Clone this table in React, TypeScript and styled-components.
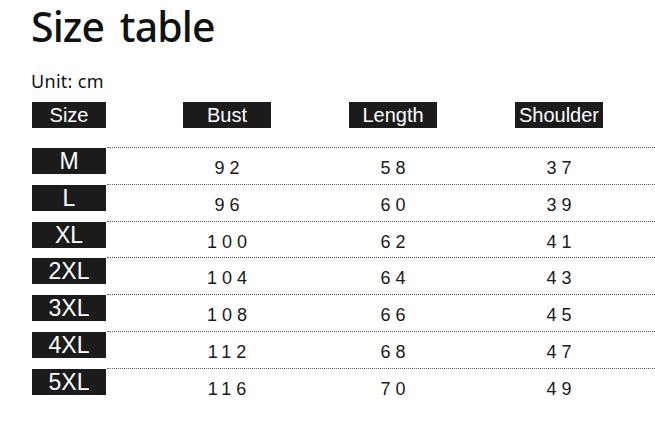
import React from 'react';
import styled, { createGlobalStyle } from 'styled-components';

const GlobalStyle = createGlobalStyle`
  html, body {
    margin: 0;
    padding: 0;
    background: #ffffff;
  }
  body {
    font-family: "Liberation Sans", Arial, sans-serif;
    color: #111;
  }
`;

const Page = styled.div`
  width: 655px;
  height: 427px;
  padding-left: 31px;
  box-sizing: border-box;
  overflow: hidden;
`;

const Title = styled.h1`
  margin: -2px 0 0;
  font-family: "Noto Sans", "Open Sans", sans-serif;
  font-weight: 500;
  font-size: 41px;
  line-height: 56px;
  letter-spacing: -0.9px;
  word-spacing: 6px;
  color: #111;
`;

const Unit = styled.div`
  margin-top: 17px;
  font-family: "Noto Sans", "Open Sans", sans-serif;
  font-size: 18px;
  line-height: 20px;
  letter-spacing: 0.3px;
  color: #111;
`;

const HeaderRow = styled.div`
  display: flex;
  margin-top: 11px;
  padding-left: 1px;
`;

const Box = styled.div<{ $w: number; $size: number }>`
  width: ${(p) => p.$w}px;
  height: 26px;
  background: #1b1b1b;
  color: #fff;
  font-family: "Liberation Sans", Arial, sans-serif;
  font-size: ${(p) => p.$size}px;
  line-height: 26px;
  text-align: center;
  flex-shrink: 0;
`;

const HeadCells = styled.div`
  display: flex;
  padding-left: 38px;
`;

const HeadCell = styled.div`
  width: 166px;
  display: flex;
  justify-content: center;
`;

const Body = styled.div`
  margin-top: 19px;
  display: flex;
  flex-direction: column;
`;

const Row = styled.div`
  display: flex;
  align-items: flex-start;
  height: 36.8px;
  padding-left: 1px;
`;

const LabelWrap = styled.div`
  padding-top: 1px;
`;

const Values = styled.div`
  flex: 1;
  display: flex;
  margin-left: 1px;
  padding-left: 37px;
  border-top: 1px dotted #5a5a5a;
`;

const Value = styled.div`
  width: 166px;
  padding-top: 11px;
  padding-left: 5px;
  box-sizing: border-box;
  text-align: center;
  font-family: "Liberation Sans", Arial, sans-serif;
  font-size: 18px;
  line-height: 18px;
  letter-spacing: 5px;
  color: #1a1a1a;
`;

const rows = [
  { size: 'M', bust: 92, length: 58, shoulder: 37 },
  { size: 'L', bust: 96, length: 60, shoulder: 39 },
  { size: 'XL', bust: 100, length: 62, shoulder: 41 },
  { size: '2XL', bust: 104, length: 64, shoulder: 43 },
  { size: '3XL', bust: 108, length: 66, shoulder: 45 },
  { size: '4XL', bust: 112, length: 68, shoulder: 47 },
  { size: '5XL', bust: 116, length: 70, shoulder: 49 },
];

export default function App() {
  return (
    <>
      <GlobalStyle />
      <Page>
        <Title>Size table</Title>
        <Unit>Unit: cm</Unit>
        <HeaderRow>
          <Box $w={74} $size={20}>Size</Box>
          <HeadCells>
            {['Bust', 'Length', 'Shoulder'].map((h) => (
              <HeadCell key={h}>
                <Box $w={88} $size={20}>{h}</Box>
              </HeadCell>
            ))}
          </HeadCells>
        </HeaderRow>
        <Body>
          {rows.map((r) => (
            <Row key={r.size}>
              <LabelWrap>
                <Box $w={74} $size={23}>{r.size}</Box>
              </LabelWrap>
              <Values>
                <Value>{r.bust}</Value>
                <Value>{r.length}</Value>
                <Value>{r.shoulder}</Value>
              </Values>
            </Row>
          ))}
        </Body>
      </Page>
    </>
  );
}
